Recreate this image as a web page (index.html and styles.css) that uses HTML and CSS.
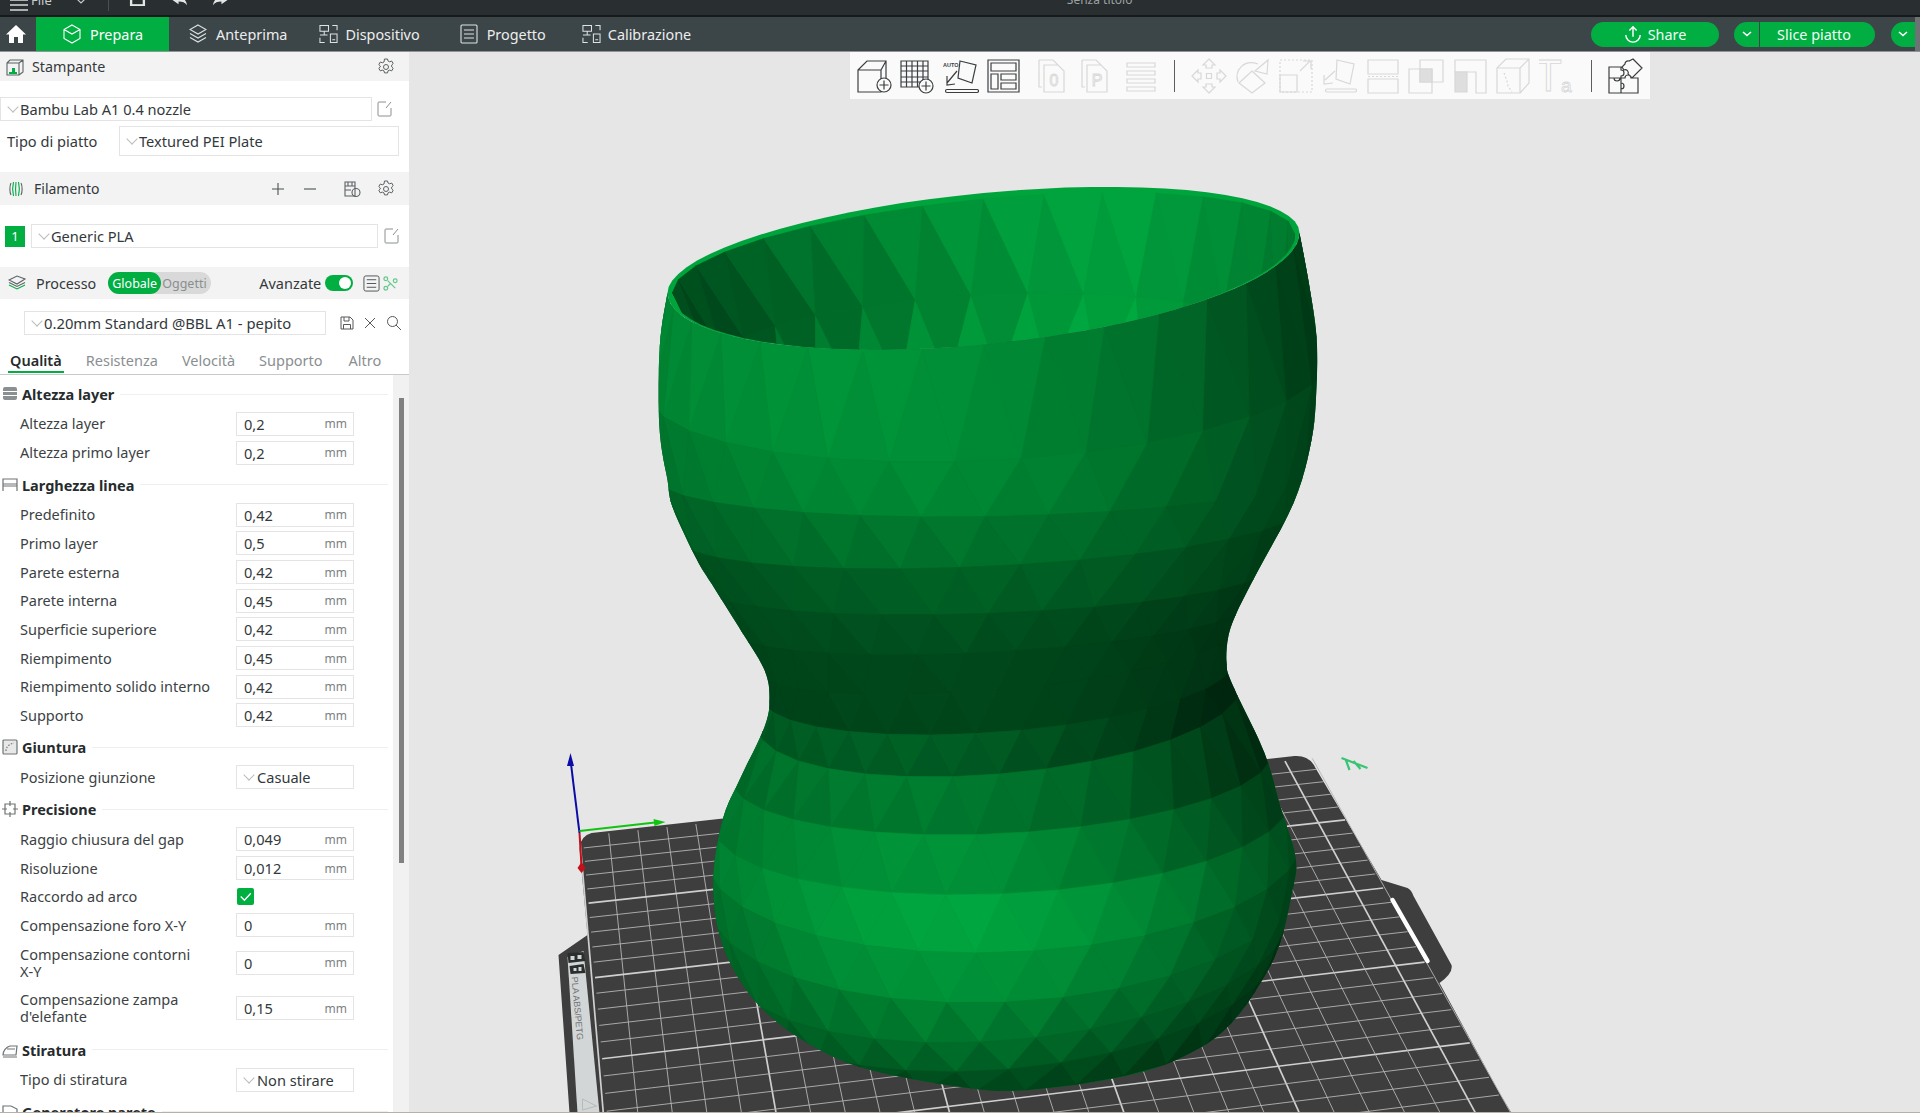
FILE: index.html
```html
<!DOCTYPE html>
<html lang="it">
<head>
<meta charset="utf-8">
<title>Bambu Studio</title>
<link rel="stylesheet" href="styles.css">
</head>
<body>
<header class="titlebar">
  <svg class="tb-menu" viewBox="0 0 18 18"><path d="M0 6h18M0 11h18M0 16h18"/></svg>
  <span class="tb-file">File</span>
  <svg class="tb-chev" viewBox="0 0 12 12"><path d="M2 4l4 4 4-4"/></svg>
  <span class="tb-sep"></span>
  <svg class="tb-save" viewBox="0 0 18 18"><path d="M1 1h13l3 3v13H1z"/><path class="tb-notch" d="M3.500 9h11v6h-11z"/></svg>
  <svg class="tb-undo" viewBox="0 0 18 18"><path d="M8 2L1 7l7 5V9c4 0 7 1 9 4-1-6-4-8-9-8z"/></svg>
  <svg class="tb-redo" viewBox="0 0 18 18"><path d="M10 2l7 5-7 5V9c-4 0-7 1-9 4 1-6 4-8 9-8z"/></svg>
  <span class="tb-title">Senza titolo</span>
</header>

<nav class="navbar">
  <svg class="home" viewBox="0 0 20 20"><path d="M10 1L0 10.500h3V19h5v-6h4v6h5v-8.500h3z"/></svg>
  <a class="tab tab-active">
    <svg viewBox="0 0 18 20"><path d="M9 1l8 4.500v9L9 19l-8-4.500v-9zM1 5.500L9 10l8-4.500M9 10"/></svg>Prepara
  </a>
  <a class="tab tab-anteprima">
    <svg viewBox="0 0 18 20"><path d="M9 1l8 4.500-8 4.500-8-4.500zM1 9.500l8 4.500 8-4.500M1 13.500l8 4.500 8-4.500"/></svg>Anteprima
  </a>
  <a class="tab tab-dispositivo">
    <svg class="wide" viewBox="0 0 20 20"><path d="M1 1h9v6H1zM5.500 7v4M1 11h8M14 1h5v5M1 14v5h5M12 10h7v9h-7zM14 16h3"/></svg>Dispositivo
  </a>
  <a class="tab tab-progetto">
    <svg viewBox="0 0 18 20"><path d="M2 1h14a1 1 0 0 1 1 1v16a1 1 0 0 1-1 1H2a1 1 0 0 1-1-1V2a1 1 0 0 1 1-1zM4 6h10M4 10h10M4 14h10"/></svg>Progetto
  </a>
  <a class="tab tab-calibrazione">
    <svg class="wide" viewBox="0 0 20 20"><path d="M1 1h9v6H1zM5.500 7v4M1 11h8M14 1h5v5M1 14v5h5M12 10h7v9h-7zM14 16h3"/></svg>Calibrazione
  </a>
  <div class="nav-actions">
    <button class="btn btn-share"><svg viewBox="0 0 20 20"><path d="M10 13V2M6 6l4-4 4 4M2 11a8 8 0 0 0 16 0"/></svg>Share</button>
    <button class="btn btn-chev"><svg viewBox="0 0 14 14"><path d="M3 5l4 3.500L11 5"/></svg></button>
    <button class="btn btn-slice">Slice piatto</button>
    <button class="btn btn-chev btn-last"><svg viewBox="0 0 14 14"><path d="M3 5l4 3.500L11 5"/></svg></button>
    <span class="nav-edge"></span>
  </div>
</nav>

<main class="workspace">
  <aside class="sidebar">
    <div class="panel-head head-printer">
      <svg class="ic" viewBox="0 0 18 18"><path class="ln" d="M1 5h12v12H1zM1 5l3-3h13v12l-4 3M13 5l4-3"/><path class="gr" d="M3 14h8v2H3zM6 10h3v4H6z"/></svg>
      <span class="head-label">Stampante</span>
      <svg class="gear" viewBox="0 0 18 18"><path d="M7.500 1h3l.5 2 1.700.8 2-.8 1.500 2.600-1.500 1.400v1.900l1.500 1.400-1.500 2.600-2-.8-1.700.8-.5 2h-3l-.5-2-1.700-.8-2 .8-1.500-2.600 1.500-1.400V8l-1.500-1.400L3.300 4l2 .8L7 4z"/><circle cx="9" cy="9" r="2.500"/></svg>
    </div>
    <div class="preset-row printer-row">
      <div class="dd dd-printer">Bambu Lab A1 0.4 nozzle</div>
      <svg class="edit" viewBox="0 0 16 18"><path d="M9 2H2a1 1 0 0 0-1 1v12a1 1 0 0 0 1 1h11a1 1 0 0 0 1-1V8M9 8l5-6"/></svg>
    </div>
    <div class="preset-row plate-row">
      <span class="plate-label">Tipo di piatto</span>
      <div class="dd dd-plate">Textured PEI Plate</div>
    </div>

    <div class="panel-head head-filament">
      <svg class="ic ic-fil" viewBox="0 0 14 18"><path class="ln" d="M2 3c-1.500 3-1.500 9 0 12M12 3c1.500 3 1.500 9 0 12"/><path class="gr" d="M4.500 2c-1 4-1 10 0 14M7 2c-.5 4-.5 10 0 14M9.500 2c1 4 1 10 0 14"/></svg>
      <span class="head-label">Filamento</span>
      <span class="head-tools">
        <svg class="tool" viewBox="0 0 16 16"><path d="M8 2v12M2 8h12"/></svg>
        <svg class="tool tool-minus" viewBox="0 0 16 16"><path d="M2 8h12"/></svg>
        <svg class="tool tool-sync" viewBox="0 0 18 18"><path d="M2 2h10v14H2zM2 6h10M5 2v4M9 2v4M2 10h6"/><circle cx="13" cy="12.500" r="4"/></svg>
        <svg class="gear" viewBox="0 0 18 18"><path d="M7.500 1h3l.5 2 1.700.8 2-.8 1.500 2.600-1.500 1.400v1.900l1.500 1.400-1.500 2.600-2-.8-1.700.8-.5 2h-3l-.5-2-1.700-.8-2 .8-1.500-2.600 1.500-1.400V8l-1.500-1.400L3.300 4l2 .8L7 4z"/><circle cx="9" cy="9" r="2.500"/></svg>
      </span>
    </div>
    <div class="preset-row filament-row">
      <span class="swatch">1</span>
      <div class="dd dd-filament">Generic PLA</div>
      <svg class="edit" viewBox="0 0 16 18"><path d="M9 2H2a1 1 0 0 0-1 1v12a1 1 0 0 0 1 1h11a1 1 0 0 0 1-1V8M9 8l5-6"/></svg>
    </div>

    <div class="panel-head head-process">
      <svg class="ic" viewBox="0 0 18 18"><path class="gr" d="M1 11l8 4 8-4"/><path class="ln" d="M1 6l8-4 8 3-8 5zM1 8.500l8 4 8-4"/></svg>
      <span class="head-label">Processo</span>
      <span class="pill"><span class="pill-on">Globale</span><span class="pill-off">Oggetti</span></span>
      <span class="adv">Avanzate</span>
      <span class="toggle"></span>
      <svg class="listic" viewBox="0 0 18 18"><rect x="1" y="1" width="16" height="16" rx="2"/><path d="M4 5h10M4 9h10M4 13h10"/></svg>
      <svg class="scissors" viewBox="0 0 16 16"><circle cx="3" cy="3" r="2"/><circle cx="3" cy="13" r="2"/><circle cx="13" cy="5" r="2"/><path d="M5 5l8 8M5 11l3-3"/></svg>
    </div>
    <div class="preset-row process-row">
      <div class="dd dd-process">0.20mm Standard @BBL A1 - pepito</div>
      <svg class="pr-ic" viewBox="0 0 14 14"><path d="M1 1h9l3 3v9H1zM4 1v4h5V1M3.500 13V8.500h7V13"/></svg>
      <svg class="pr-ic pr-x" viewBox="0 0 14 14"><path d="M2 2l10 10M12 2L2 12"/></svg>
      <svg class="pr-ic pr-search" viewBox="0 0 16 16"><circle cx="6.500" cy="6.500" r="5"/><path d="M10 10l5 5"/></svg>
    </div>

    <div class="tabs">
      <span class="st-tab st-active">Qualità</span>
      <span class="st-tab">Resistenza</span>
      <span class="st-tab">Velocità</span>
      <span class="st-tab">Supporto</span>
      <span class="st-tab">Altro</span>
    </div>

    <div class="scroller">
      <div class="settings">
        <h3 class="group"><svg viewBox="0 0 16 16"><path d="M3 1h10a2 2 0 0 1 2 2v2H1V3a2 2 0 0 1 2-2zM1 6h14v3H1zM1 10h14v2a2 2 0 0 1-2 2H3a2 2 0 0 1-2-2z"/></svg>Altezza layer</h3>
        <div class="row"><label>Altezza layer</label><div class="num">0,2<i>mm</i></div></div>
        <div class="row"><label>Altezza primo layer</label><div class="num">0,2<i>mm</i></div></div>

        <h3 class="group g-tall"><svg class="o" viewBox="0 0 16 16"><path d="M1 2h14v5H1zM1 7v7M15 7v7M1 9h14"/></svg>Larghezza linea</h3>
        <div class="row"><label>Predefinito</label><div class="num">0,42<i>mm</i></div></div>
        <div class="row"><label>Primo layer</label><div class="num">0,5<i>mm</i></div></div>
        <div class="row"><label>Parete esterna</label><div class="num">0,42<i>mm</i></div></div>
        <div class="row"><label>Parete interna</label><div class="num">0,45<i>mm</i></div></div>
        <div class="row"><label>Superficie superiore</label><div class="num">0,42<i>mm</i></div></div>
        <div class="row"><label>Riempimento</label><div class="num">0,45<i>mm</i></div></div>
        <div class="row"><label>Riempimento solido interno</label><div class="num">0,42<i>mm</i></div></div>
        <div class="row"><label>Supporto</label><div class="num">0,42<i>mm</i></div></div>

        <h3 class="group g-tall"><svg class="o f" viewBox="0 0 16 16"><rect x="1" y="1" width="14" height="14" rx="1"/><path class="dots" d="M4 12c0-4 3-7 8-8"/></svg>Giuntura</h3>
        <div class="row"><label>Posizione giunzione</label><div class="dd dd-val">Casuale</div></div>

        <h3 class="group g-tall"><svg class="o" viewBox="0 0 16 16"><path d="M3 3h10v10H3zM8 0v5M8 11v5M0 8h5M11 8h5"/></svg>Precisione</h3>
        <div class="row"><label>Raggio chiusura del gap</label><div class="num">0,049<i>mm</i></div></div>
        <div class="row"><label>Risoluzione</label><div class="num">0,012<i>mm</i></div></div>
        <div class="row"><label>Raccordo ad arco</label><span class="check"><svg viewBox="0 0 16 16"><path d="M3.500 8l3.500 3.500 6-6.500"/></svg></span></div>
        <div class="row"><label>Compensazione foro X-Y</label><div class="num">0<i>mm</i></div></div>
        <div class="row row-2"><label>Compensazione contorni <span class="nb">X-Y</span></label><div class="num">0<i>mm</i></div></div>
        <div class="row row-2"><label>Compensazione zampa d'elefante</label><div class="num">0,15<i>mm</i></div></div>

        <h3 class="group g-tall g-iron"><svg class="o" viewBox="0 0 16 16"><path d="M1 13c0-4 3-8 7-9h7l-1 9zM1 15h14M5 7h8"/></svg>Stiratura</h3>
        <div class="row"><label>Tipo di stiratura</label><div class="dd dd-val">Non stirare</div></div>

        <h3 class="group g-tall"><svg class="o" viewBox="0 0 16 16"><path d="M1 2h8l6 3v9H1z"/></svg>Generatore parete</h3>
      </div>
      <div class="gutter"><div class="thumb"></div></div>
    </div>
  </aside>

  <section class="viewport">
    <svg id="scene" class="scene" viewBox="410 52 1510 1060"></svg>
    <div class="toolbar">
      <svg class="ti" viewBox="0 0 36 36"><path d="M2 12h23v22H2zM2 12L11 3h19v20M25 12l5-9"/><circle class="wf" cx="28" cy="27" r="7"/><path d="M28 22.500v9M23.500 27h9"/></svg>
      <svg class="ti" viewBox="0 0 36 36"><path d="M2 3h27v26H2zM2 8h27M2 13h27M2 19h27M2 24h27M7.500 3v26M13 3v26M18.500 3v26M24 3v26"/><circle class="wf" cx="27" cy="28" r="7"/><path d="M27 23.500v9M22.500 28h9"/></svg>
      <svg class="ti" viewBox="0 0 36 36"><text class="ti-auto" x="0" y="9">AUTO</text><path d="M17 3l16 4-4 18-14-5zM4 31.500h30a1.200 1.200 0 0 1 0 3H4a1.200 1.200 0 0 1 0-3zM14 13L4 25M4 18v9l8-1"/></svg>
      <svg class="ti" viewBox="0 0 36 36"><path d="M2 2h31v32H2zM5 5h25v8H5zM5 16h7v15H5zM15 16h15v6H15zM15 25h15v6H15z"/></svg>
      <svg class="ti dis m1" viewBox="0 0 36 36"><path d="M3 2h14l6 6M3 2v27h3M8 7h14l6 6v21H8z"/><text class="ti-ltr" x="18" y="28">0</text></svg>
      <svg class="ti dis" viewBox="0 0 36 36"><path d="M3 2h14l6 6M3 2v27h3M8 7h14l6 6v21H8z"/><text class="ti-ltr" x="18" y="28">P</text></svg>
      <svg class="ti dis" viewBox="0 0 36 36"><path d="M4 5h28v4H4zM4 13h28v4H4zM4 21h28v4H4zM4 29h28v4H4z"/></svg>
      <span class="tsep s1"></span>
      <svg class="ti dis" viewBox="0 0 36 36"><path d="M18 1l6 6h-3v3h-6V7h-3zM18 35l6-6h-3v-3h-6v3h-3zM1 18l6-6v3h3v6H7v3zM35 18l-6-6v3h-3v6h3v3zM15.500 15.500h5v5h-5z"/></svg>
      <svg class="ti dis" viewBox="0 0 36 36"><path d="M18 13l13 12-13 10L5 25zM4 24C0 12 10 1 24 6M34 2l-1 14-12-3z"/></svg>
      <svg class="ti dis" viewBox="0 0 36 36"><path class="dash" d="M2 2h32v32H2z"/><path d="M2 17h17v17H2zM22 13L32 3M25 3h8v8"/></svg>
      <svg class="ti dis" viewBox="0 0 36 36"><path d="M16 2l17 4-4 20-14-5zM6 31h28a1.500 1.500 0 0 1 0 3H6a1.500 1.500 0 0 1 0-3zM14 13L4 22M3 17v9l9-1"/></svg>
      <svg class="ti dis" viewBox="0 0 36 36"><path d="M3 2h30v14H3zM3 21h30v14H3z"/><path class="dash" d="M3 18.500h30"/></svg>
      <svg class="ti dis" viewBox="0 0 36 36"><path d="M12 2h23v22H12zM1 11h23v24H1z"/><path class="hatch" d="M12 11h12v13H12z"/></svg>
      <svg class="ti dis" viewBox="0 0 36 36"><path d="M3 2h31v33H24V14H3z"/><path class="hatch" d="M3 14h12v20H3z"/></svg>
      <svg class="ti dis" viewBox="0 0 36 36"><path d="M2 10h23v25H2zM2 10l9-9h23v24l-9 10M25 10l9-9"/><path class="dash" d="M9 15l3 8 1 5 4 6"/></svg>
      <svg class="ti dis" viewBox="0 0 36 36"><text class="ti-T" x="-4" y="33">T</text><text class="ti-a" x="22" y="34">a</text></svg>
      <span class="tsep s2"></span>
      <svg class="ti" viewBox="0 0 36 36"><path d="M2 9h12v3a3 3 0 0 1 0 6v2H2zM2 20h5a3 3 0 0 0 6 0h1v15H2zM14 20h4a3 3 0 0 1 6 0h7v15H14v-4a3 3 0 0 0 0-6zM26 1l9 9-10 10-4-4a3 3 0 0 0-4-4l-2-3 3-3a3 3 0 0 1 4-3z"/></svg>
    </div>
  </section>
</main>
<script src="scene.js"></script>
</body>
</html>
```

FILE: styles.css
```css
* { box-sizing: border-box; }
html, body { margin: 0; height: 1113px; overflow: hidden; }
body {
  display: flex;
  flex-direction: column;
  font-family: "Noto Sans", "Liberation Sans", sans-serif;
  font-size: 14.600px;
  color: #33393b;
  background: #fff;
  border-bottom: 1px solid #b9b0a4;
}
svg { flex: none; display: block; fill: none; }

/* title bar: cut by the top of the screen */
.titlebar {
  flex: none;
  height: 17px;
  display: flex;
  align-items: flex-end;
  padding: 0 0 8px 10px;
  background: #292e30;
  border-bottom: 2px solid #17191a;
  color: #c8cbcc;
  overflow: hidden;
}
.tb-menu { width: 18px; height: 18px; stroke: #d8dadb; stroke-width: 1.500; margin-bottom: -5px; }
.tb-file { font-size: 13px; line-height: 14px; margin-left: 3px; }
.tb-chev { width: 12px; height: 12px; stroke: #c8cbcc; stroke-width: 1.200; margin-left: 23px; }
.tb-sep { width: 1px; height: 14px; background: #4a5052; margin: 0 0 -4px 21px; }
.tb-save, .tb-undo, .tb-redo { width: 17px; height: 17px; fill: #e4e6e6; }
.tb-notch { fill: #292e30; }
.tb-save { margin: 0 0 0 20px; }
.tb-undo { margin: 0 0 -3px 25px; }
.tb-redo { margin: 0 0 -3px 24px; }
.tb-title { font-size: 12px; line-height: 14px; margin-left: 838px; color: #9ca1a3; }

/* main tabs */
.navbar {
  flex: none;
  height: 35px;
  display: flex;
  align-items: center;
  background: #3c4548;
  border-bottom: 1px solid #8f9496;
  color: #eceeee;
  font-size: 14.400px;
}
.home { width: 20px; height: 20px; fill: #fff; margin: 0 10px 0 6px; }
.tab { display: flex; align-items: center; height: 34px; gap: 9px; }
.tab svg { width: 18px; height: 20px; stroke: #dfe2e2; stroke-width: 1.100; }
.tab svg.wide { width: 19px; margin-right: -2px; }
.tab-active { width: 133px; padding-left: 27px; background: #00ae42; color: #fff; }
.tab-active svg { stroke: #fff; }
.tab-anteprima { margin-left: 20px; }
.tab-dispositivo { margin-left: 32px; }
.tab-progetto { margin-left: 40px; }
.tab-calibrazione { margin-left: 36px; }
.nav-actions { margin-left: auto; display: flex; align-items: center; height: 25px; }
.btn {
  height: 25px;
  display: flex;
  align-items: center;
  justify-content: center;
  border: 0;
  padding: 0;
  background: #00ae42;
  color: #f0fff5;
  font: inherit;
  font-size: 14.400px;
}
.btn svg { stroke: #fff; stroke-width: 1.600; }
.btn-share { width: 128px; border-radius: 13px; gap: 6px; margin-right: 15px; }
.btn-share svg { width: 18px; height: 18px; }
.btn-chev { width: 25px; border-radius: 13px 0 0 13px; }
.btn-chev svg { width: 14px; height: 14px; }
.btn-slice { width: 115px; padding-right: 7px; margin-left: 1px; border-radius: 0 13px 13px 0; margin-right: 16px; }
.btn-last { width: 24px; }
.nav-edge { width: 5px; height: 34px; background: #6d7375; }

.workspace { flex: 1; min-height: 0; display: flex; }

/* left panel */
.sidebar { flex: none; width: 409px; display: flex; flex-direction: column; background: #fff; overflow: hidden; }
.panel-head { flex: none; display: flex; align-items: center; background: #f3f3f3; }
.head-printer { height: 29px; padding: 0 14px 0 6px; }
.head-filament { height: 33px; margin-top: 16px; padding: 0 14px 0 9px; }
.head-process { height: 32px; margin-top: 19px; padding: 0 9px 0 8px; }
.ic { width: 18px; height: 18px; stroke-width: 1.100; }
.ic-fil { width: 14px; }
.ic .ln { stroke: #5d6365; }
.ic .gr { stroke: #00ae42; fill: none; }
.head-printer .ic .gr { fill: #00ae42; stroke: none; }
.head-label { margin-left: 8px; font-size: 14.300px; color: #33393b; }
.head-filament .head-label { margin-left: 11px; font-size: 14px; }
.head-process .head-label { margin-left: 10px; }
.gear { width: 18px; height: 18px; stroke: #5b6163; stroke-width: 1; margin-left: auto; }
.head-tools { margin-left: auto; display: flex; align-items: center; }
.tool { width: 16px; height: 16px; stroke: #4a5052; stroke-width: 1.100; margin-right: 16px; }
.tool-minus { margin-right: 25px; }
.tool-sync { width: 18px; height: 18px; margin-right: 16px; stroke: #5b6163; }
.head-tools .gear { margin-left: 0; }

.preset-row { flex: none; display: flex; align-items: center; }
.dd {
  position: relative;
  display: flex;
  align-items: center;
  height: 100%;
  padding-left: 19px;
  border: 1px solid #e4e4e4;
  background: #fff;
  color: #33393b;
}
.dd::before {
  content: "";
  position: absolute;
  left: 8px;
  top: 50%;
  width: 7px;
  height: 7px;
  margin-top: -6px;
  border-right: 1px solid #b9bcbd;
  border-bottom: 1px solid #b9bcbd;
  transform: rotate(45deg);
}
.edit { width: 16px; height: 18px; stroke: #8a8f91; stroke-width: 1; }
.printer-row { height: 24px; margin-top: 16px; }
.dd-printer { width: 372px; }
.printer-row .edit { margin-left: 5px; }
.plate-row { height: 30px; margin-top: 5px; padding-left: 7px; }
.plate-label { width: 112px; }
.dd-plate { width: 280px; }
.filament-row { height: 24px; margin-top: 19px; padding-left: 5px; }
.swatch { width: 20px; height: 21px; display: flex; align-items: center; justify-content: center; background: #00ae42; color: #fff; font-size: 13px; }
.dd-filament { width: 347px; margin-left: 6px; }
.filament-row .edit { margin-left: 6px; }

.pill { margin-left: 12px; width: 103px; height: 22px; display: flex; border-radius: 11px; background: #d9d9d9; font-size: 12.500px; }
.pill-on { width: 53px; display: flex; align-items: center; justify-content: center; border-radius: 11px; background: #00ae42; color: #fff; }
.pill-off { display: flex; align-items: center; padding-left: 1px; color: #8a8f91; }
.adv { margin-left: 48px; font-size: 14.500px; }
.toggle { position: relative; margin-left: 4px; width: 28px; height: 16px; border-radius: 8px; background: #00ae42; }
.toggle::after { content: ""; position: absolute; right: 2px; top: 2px; width: 12px; height: 12px; border-radius: 50%; background: #fff; }
.listic { width: 17px; height: 17px; margin-left: 10px; stroke: #4a5052; stroke-width: 1; }
.scissors { width: 15px; height: 15px; margin-left: 3px; stroke: #62c98a; stroke-width: 1.300; }

.process-row { height: 24px; margin-top: 12px; padding-left: 24px; }
.dd-process { width: 302px; font-size: 14.800px; padding-left: 19px; }
.pr-ic { width: 14px; height: 14px; stroke: #55595b; stroke-width: 1; margin-left: 14px; }
.pr-x { margin-left: 9px; }
.pr-search { width: 16px; height: 16px; margin-left: 9px; }

.tabs { flex: none; height: 40px; display: flex; padding: 15px 0 0 8px; border-bottom: 1px solid #c9c9c9; font-size: 14.500px; color: #8a8f91; }
.st-tab { height: 25px; padding: 0 2px; margin-right: 20px; }
.st-tab:nth-child(4) { margin-right: 22px; }
.st-active { height: 23px; border-bottom: 2px solid #00ae42; color: #262b2d; font-weight: 600; }

.scroller { flex: 1; min-height: 0; display: flex; overflow: hidden; }
.settings { flex: 1; padding-top: 7px; display: flex; flex-direction: column; gap: 4.700px; }
.group {
  flex: none;
  height: 24px;
  margin: 0 5px 1.300px 2px;
  display: flex;
  align-items: center;
  font-size: 14.500px;
  font-weight: 700;
  color: #262b2d;
}
.g-tall { margin-top: 3.300px; }
.g-iron { margin-top: 4.300px; }
.group svg { width: 16px; height: 16px; margin-right: 4px; fill: #8a8f91; }
.group svg.o { fill: none; stroke: #6e7375; stroke-width: 1.200; }
.group svg.f { fill: #e8e8e8; }
.group .dots { stroke-dasharray: 1.500 1.500; }
.group::after { content: ""; flex: 1; height: 1px; margin-left: 6px; background: #efefef; }
.row { flex: none; height: 24px; display: flex; align-items: center; padding-left: 20px; }
.row label { width: 216px; padding-right: 22px; line-height: 17px; font-size: 14.500px; color: #3c4244; }
.nb { white-space: nowrap; }
.row-2 { height: 41px; }
.num, .dd-val { width: 118px; height: 24px; border: 1px solid #e4e4e4; }
.num { display: flex; align-items: center; padding: 0 6px 0 7px; color: #33393b; }
.num i { margin-left: auto; font-style: normal; font-size: 12px; color: #7c8183; }
.dd-val { padding-left: 20px; }
.check { width: 17px; height: 17px; margin-left: 1px; border-radius: 2px; background: #00ae42; }
.check svg { width: 17px; height: 17px; stroke: #fff; stroke-width: 1.300; }
.gutter { flex: none; width: 16px; padding: 23px 0 0 6px; background: #f1f1f1; }
.thumb { width: 5px; height: 465px; background: #808080; }

/* 3D view */
.viewport { position: relative; flex: 1; min-width: 0; background: #e6e6e6; overflow: hidden; }
.scene { position: absolute; left: 0; top: 0; width: 1511px; height: 1060px; }
.toolbar {
  position: absolute;
  left: 441px;
  top: 0;
  width: 800px;
  height: 47px;
  padding-left: 6px;
  display: flex;
  align-items: center;
  gap: 7.450px;
  background: #fafafa;
}
.ti { width: 36px; height: 36px; stroke: #3b3f41; stroke-width: 1.200; }
.ti.dis { stroke: #d8d8d8; }
.ti .wf { fill: #fafafa; }
.ti .dash { stroke-dasharray: 2 2; }
.ti .hatch { fill: #dedede; }
.ti text { font-family: "Liberation Sans", sans-serif; }
.ti-auto { font-size: 5.500px; font-weight: 700; fill: #3b3f41; stroke: none; }
.ti-ltr { font-size: 16px; text-anchor: middle; fill: none; stroke-width: .9; }
.ti-T { font-size: 44px; fill: none; stroke-width: .9; }
.ti-a { font-size: 19px; fill: none; stroke-width: .8; }
.m1 { margin-left: 6px; }
.tsep { flex: none; width: 1px; height: 32px; background: #5a5e60; }
.s1 { margin: 0 8.500px 0 8px; }
.s2 { margin: 0 7px 0 9.500px; }
.plate-text { font-family: "Liberation Sans", sans-serif; font-size: 9px; fill: #6f7172; }
```

FILE: scene.js
```js
(function () {
  var NS = "http://www.w3.org/2000/svg";
  var svg = document.getElementById("scene");
  function el(name, attrs, parent) {
    var n = document.createElementNS(NS, name);
    for (var k in attrs) n.setAttribute(k, attrs[k]);
    (parent || svg).appendChild(n);
    return n;
  }
  function pts(list) {
    return list.map(function (p) { return p[0].toFixed(1) + "," + p[1].toFixed(1); }).join(" ");
  }
  function green(s) {
    s = Math.max(0.22, Math.min(1, s));
    return "rgb(0," + Math.round(174 * s) + "," + Math.round(66 * s) + ")";
  }
  function hash(a, b) {
    var v = Math.sin(a * 12.9898 + b * 78.233) * 43758.5453;
    return v - Math.floor(v);
  }

  /* ---- build plate ---- */
  el("path", {
    fill: "#3e3e3e",
    d: "M580 848Q581 836 592 833L1295 756Q1310 755 1316 768L1382 880L1408 888Q1412 890 1414 896L1452 965Q1454 973 1440 983L1500 1093L1512 1113L570 1113L559 955L588 935Z"
  });
  /* projective map of the 26 x 26 cell plate */
  var Q = [[580, 835], [1312, 757], [1532, 1150], [617, 1267]];
  function homography(q) {
    var dx1 = q[1][0] - q[2][0], dx2 = q[3][0] - q[2][0], sx = q[0][0] - q[1][0] + q[2][0] - q[3][0];
    var dy1 = q[1][1] - q[2][1], dy2 = q[3][1] - q[2][1], sy = q[0][1] - q[1][1] + q[2][1] - q[3][1];
    var d = dx1 * dy2 - dx2 * dy1;
    var g = (sx * dy2 - dx2 * sy) / d, h = (dx1 * sy - sx * dy1) / d;
    return function (u, v) {
      var w = g * u + h * v + 1;
      return [
        ((q[1][0] - q[0][0] + g * q[1][0]) * u + (q[3][0] - q[0][0] + h * q[3][0]) * v + q[0][0]) / w,
        ((q[1][1] - q[0][1] + g * q[1][1]) * u + (q[3][1] - q[0][1] + h * q[3][1]) * v + q[0][1]) / w
      ];
    };
  }
  var H = homography(Q);
  for (var i = 0; i <= 26; i++) {
    var major = i % 5 === 0;
    var a = H(i / 26, 0.004), b = H(i / 26, 1);
    var c = H(0.004, i / 26), d = H(0.998, i / 26);
    var style = { stroke: major ? "#cfcfcf" : "#b4b4b4", "stroke-width": major ? 1.7 : 0.9 };
    el("line", Object.assign({ x1: a[0], y1: a[1], x2: b[0], y2: b[1] }, style));
    if (i > 0 && i < 26) el("line", Object.assign({ x1: c[0], y1: c[1], x2: d[0], y2: d[1] }, style));
  }
  /* label strip at the plate's left edge */
  el("polygon", { fill: "#d2d6d6", points: "568,957 584,951 600,1113 578,1113" });
  el("polygon", { fill: "#2c2e2e", points: "568,953 584,952 586,961 569,963" });
  el("polygon", { fill: "#2c2e2e", points: "570,966 584,964 586,973 571,974" });
  el("path", { d: "M571 956h4v4h-4zM578 955h4v4h-4zM574 968h3v3h-3zM579 967h3v4h-3z", fill: "#d2d6d6" });
  var label = el("text", { class: "plate-text", transform: "translate(572 977) rotate(85)" });
  label.textContent = "PLA ABS/PETG";
  el("polygon", { fill: "none", stroke: "#b7baba", points: "583,1110 597,1106 583,1099" });
  /* grab slot */
  el("line", { x1: 1393, y1: 900, x2: 1428, y2: 961, stroke: "#fff", "stroke-width": 4.5, "stroke-linecap": "round" });
  /* small logo */
  el("path", { d: "M1342 758l26 10M1346 759l4 11M1354 761l7 8", fill: "none", stroke: "#38c473", "stroke-width": 2.2 });

  /* ---- axes ---- */
  el("line", { x1: 571, y1: 760, x2: 580, y2: 833, stroke: "#0b0ba8", "stroke-width": 2 });
  el("polygon", { fill: "#0b0ba8", points: "571,753 574.5,766 567.5,766" });
  el("line", { x1: 580, y1: 831, x2: 660, y2: 822, stroke: "#12c412", "stroke-width": 2 });
  el("polygon", { fill: "#12c412", points: "666,822 654,819 655,826" });
  el("line", { x1: 580, y1: 833, x2: 582, y2: 866, stroke: "#c3101a", "stroke-width": 2 });
  el("polygon", { fill: "#c3101a", points: "582,862 586,868 582,873 578,868" });

  /* ---- vase ---- */
  var raw = [
    [668, 293, 1300, 233, 350], [659, 393, 1317, 360, 462], [668, 480, 1302, 470, 517],
    [690, 540, 1290, 510, 569], [718, 590, 1258, 570, 615], [742, 632, 1240, 605, 655],
    [765, 670, 1231, 628, 695], [770, 698, 1227, 663, 735], [765, 727, 1234, 687, 777],
    [740, 780, 1265, 753, 835], [722, 825, 1283, 800, 895], [716, 860, 1294, 840, 953],
    [716, 900, 1294, 875, 1003], [733, 960, 1283, 915, 1043], [748, 993, 1269, 947, 1072],
    [745, 1010, 1255, 990, 1092]
  ];
  var rings = raw.map(function (r, n) {
    var cx = (r[0] + r[2]) / 2, cy = (r[1] + r[3]) / 2;
    var ax = (r[2] - r[0]) / 2, ay = (r[3] - r[1]) / 2;
    return {
      cx: cx, cy: cy, ax: n ? ax * 1.03 : ax, ay: ay,
      by: Math.sqrt(Math.max(100, Math.pow(r[4] - cy, 2) - ay * ay))
    };
  });
  /* brightness, peak, falloff, triangle contrast */
  var bands = [
    [0.85, -0.45, 0.27, 0.03], [0.80, -0.3, 0.34, 0.035], [0.68, -0.2, 0.33, 0.05],
    [0.56, -0.15, 0.33, 0.05], [0.47, -0.25, 0.25, 0.05], [0.42, -0.3, 0.2, 0.03],
    [0.41, -0.3, 0.2, 0.015], [0.56, -0.5, 0.3, 0.07], [0.72, -0.4, 0.3, 0.05],
    [0.84, -0.3, 0.34, 0.02], [0.95, -0.2, 0.38, 0.015], [0.86, -0.2, 0.42, 0.03],
    [0.74, -0.2, 0.38, 0.08], [0.62, -0.2, 0.36, 0.12], [0.46, -0.2, 0.3, 0.12]
  ];
  var SEG = 16;
  function pt(r, th) {
    return [r.cx + r.ax * Math.cos(th), r.cy + r.ay * Math.cos(th) + r.by * Math.sin(th)];
  }
  function thetas(level, start) {
    var list = [], off = level % 2 ? 0.5 : 0;
    list.push(start);
    for (var j = 0; j <= SEG; j++) {
      var th = start + Math.PI * (j + off) / SEG;
      if (th > start + 1e-6 && th < start + Math.PI - 1e-6) list.push(th);
    }
    list.push(start + Math.PI);
    return list;
  }
  function strip(rA, lvA, rB, lvB, start, shade, parent) {
    var A = thetas(lvA, start), B = thetas(lvB, start);
    var i = 0, k = 0, n = 0;
    while (i < A.length - 1 || k < B.length - 1) {
      var up = k >= B.length - 1 || (i < A.length - 1 && A[i + 1] <= B[k + 1]);
      var tri = up
        ? [pt(rA, A[i]), pt(rA, A[i + 1]), pt(rB, B[k])]
        : [pt(rB, B[k]), pt(rB, B[k + 1]), pt(rA, A[i])];
      if (up) i++; else k++;
      var mx = (tri[0][0] + tri[1][0] + tri[2][0]) / 3;
      var col = green(shade(mx, up, n++));
      el("polygon", { points: pts(tri), fill: col, stroke: col, "stroke-width": 0.7 }, parent);
    }
  }

  /* smooth outline of the body */
  function spline(list) {
    var out = [];
    for (var i = 0; i < list.length - 1; i++) {
      var p0 = list[Math.max(0, i - 1)], p1 = list[i], p2 = list[i + 1], p3 = list[Math.min(list.length - 1, i + 2)];
      for (var s = 0; s < 6; s++) {
        var t = s / 6, t2 = t * t, t3 = t2 * t;
        out.push([0, 1].map(function (c) {
          return 0.5 * (2 * p1[c] + (p2[c] - p0[c]) * t + (2 * p0[c] - 5 * p1[c] + 4 * p2[c] - p3[c]) * t2 + (3 * p1[c] - p0[c] - 3 * p2[c] + p3[c]) * t3);
        }));
      }
    }
    out.push(list[list.length - 1]);
    return out;
  }
  var outline = spline([
    [668, 293], [661, 337], [659, 393], [661, 440], [668, 480], [673, 507], [696, 557], [716, 590], [743, 633],
    [765, 670], [770, 698], [765, 727], [740, 780], [724, 817], [714, 873], [718, 927], [736, 973], [767, 1013],
    [815, 1047], [871, 1070], [969, 1088], [1030, 1090], [1122, 1077], [1183, 1057], [1232, 1023], [1275, 957],
    [1293, 890], [1296, 857], [1281, 807], [1265, 753], [1234, 687], [1227, 663], [1231, 628], [1252, 583],
    [1294, 503], [1312, 440], [1317, 387], [1317, 337], [1310, 287], [1300, 233]
  ]);
  for (var th = 0; th <= Math.PI + 1e-6; th += Math.PI / 48) outline.push(pt(rings[0], th));

  /* inside of the vase, seen through the rim */
  var rim = rings[0];
  function ellipsePath(r, backBy, frontBy) {
    var d = "", steps = 72;
    for (var i = 0; i <= steps; i++) {
      var th = (i / steps) * 2 * Math.PI;
      var by = th > Math.PI ? backBy : frontBy;
      var p = [r.cx + r.ax * Math.cos(th), r.cy + r.ay * Math.cos(th) + by * Math.sin(th)];
      d += (i ? "L" : "M") + p[0].toFixed(1) + " " + p[1].toFixed(1);
    }
    return d + "Z";
  }
  var defs = el("defs", {});
  var clip = el("clipPath", { id: "rimclip" }, defs);
  var inner0 = { cx: rim.cx, cy: rim.cy, ax: rim.ax * 0.988, ay: rim.ay * 0.988 };
  el("path", { d: ellipsePath(inner0, 66, rim.by) }, clip);
  var bodyClip = el("clipPath", { id: "bodyclip" }, defs);
  el("polygon", { points: pts(outline) }, bodyClip);
  el("path", { d: ellipsePath(rim, 70, rim.by), fill: "rgb(0,164,60)" });
  var inside = el("g", { "clip-path": "url(#rimclip)" });
  function interiorShade(x) {
    var t = (x - 984) / 316;
    var keys = [[-1, 0.42], [-0.85, 0.48], [-0.6, 0.66], [-0.2, 0.82], [0.2, 0.93], [0.45, 0.95], [0.8, 0.8], [1, 0.68]];
    for (var i = 1; i < keys.length; i++) {
      if (t <= keys[i][0]) {
        var f = (t - keys[i - 1][0]) / (keys[i][0] - keys[i - 1][0]);
        return keys[i - 1][1] + Math.max(0, f) * (keys[i][1] - keys[i - 1][1]);
      }
    }
    return 0.68;
  }
  function interiorContrast(x, low, high) {
    var f = Math.max(0, Math.min(1, (x - 700) / 450));
    return low + (high - low) * f;
  }
  var ir0 = { cx: 984, cy: 263, ax: 311, ay: -29.5, by: 64 };
  var ir1 = { cx: 1000, cy: 360, ax: 290, ay: -10, by: 66 };
  var ir2 = { cx: 1000, cy: 450, ax: 260, ay: -10, by: 72 };
  strip(ir0, 0, ir1, 1, Math.PI, function (x, up) {
    return interiorShade(x) * (up ? 1 : 1 - interiorContrast(x, 0.16, 0.05));
  }, inside);
  strip(ir1, 1, ir2, 0, Math.PI, function (x, up) {
    return interiorShade(x) * 1.02 * (up ? 1 - interiorContrast(x, 0.22, 0.05) : 1);
  }, inside);

  /* outer wall, top band to foot */
  el("polygon", { points: pts(outline), fill: "rgb(0,96,36)" });
  var body = el("g", { "clip-path": "url(#bodyclip)" });
  bands.forEach(function (band, n) {
    var r = rings[n];
    strip(r, n, rings[n + 1], n + 1, 0, function (x, up, idx) {
      var t = (x - r.cx) / r.ax;
      var base = band[0] * (1 - band[2] * Math.pow(t - band[1], 2));
      var jitter = (hash(n, idx) - 0.5) * 0.018;
      return base * (up ? 1 : 1 - band[3]) + jitter;
    }, body);
  });
})();
```
